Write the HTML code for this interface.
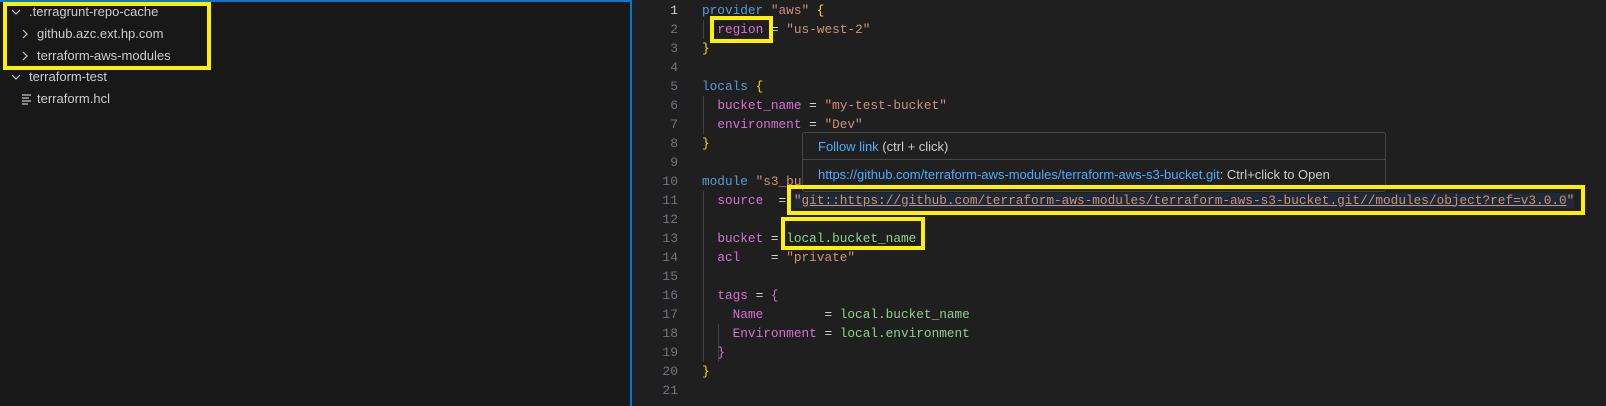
<!DOCTYPE html>
<html><head><meta charset="utf-8"><style>
body{margin:0;width:1606px;height:406px;background:#1f1f1f;position:relative;overflow:hidden;font-family:"Liberation Sans",sans-serif}
#side{position:absolute;left:0;top:0;width:632px;height:406px;background:#181818;border-top:2px solid #0078d4;border-right:2px solid #0078d4;box-sizing:border-box}
.row{position:absolute;height:22px;line-height:22px;font-size:13px;color:#cccccc;white-space:nowrap}
.ln{position:absolute;left:640px;width:38px;text-align:right;font-family:"Liberation Mono",monospace;font-size:13px;color:#6e7681;height:19px;line-height:19px}
.code{position:absolute;left:702px;font-family:"Liberation Mono",monospace;font-size:12.75px;height:19px;line-height:19px;white-space:pre;color:#cccccc}
.k{color:#569cd6}.s{color:#ce9178}.p{color:#d670d6}.g{color:#8fd18b}.y{color:#ffd700}.m{color:#da70d6}.o{color:#d4d4d4}
.box{position:absolute;border:4px solid #ffef00;box-sizing:border-box}
.guide{position:absolute;width:1px;background:#404040}
</style></head><body>
<div id="side"></div>
<div class="row" style="left:29px;top:1px">.terragrunt-repo-cache</div>
<div class="row" style="left:37px;top:23px">github.azc.ext.hp.com</div>
<div class="row" style="left:37px;top:45px">terraform-aws-modules</div>
<div class="row" style="left:29px;top:66px">terraform-test</div>
<div class="row" style="left:37px;top:88px">terraform.hcl</div>
<svg style="position:absolute;left:0;top:0" width="40" height="110" fill="none" stroke="#c5c5c5" stroke-width="1.2">
<path d="M12 10l4 4 4-4"/><path d="M23 30l4 4-4 4"/><path d="M23 52l4 4-4 4"/><path d="M12 75l4 4 4-4"/>
<path d="M22 95h9M22 98h7M22 101h9M22 104h6"/></svg>
<div class="box" style="left:3px;top:2px;width:208px;height:68px"></div>

<div class="guide" style="left:703px;top:20px;height:19px"></div>
<div class="guide" style="left:703px;top:96px;height:38px"></div>
<div class="guide" style="left:703px;top:191px;height:171px"></div>
<div class="guide" style="left:718px;top:324px;height:38px"></div>

<div class="ln" style="top:0.5px;color:#cccccc">1</div>
<div class="ln" style="top:19.5px">2</div><div class="ln" style="top:38.5px">3</div><div class="ln" style="top:57.5px">4</div>
<div class="ln" style="top:76.5px">5</div><div class="ln" style="top:95.5px">6</div><div class="ln" style="top:114.5px">7</div>
<div class="ln" style="top:133.5px">8</div><div class="ln" style="top:152.5px">9</div><div class="ln" style="top:171.5px">10</div>
<div class="ln" style="top:190.5px">11</div><div class="ln" style="top:209.5px">12</div><div class="ln" style="top:228.5px">13</div>
<div class="ln" style="top:247.5px">14</div><div class="ln" style="top:266.5px">15</div><div class="ln" style="top:285.5px">16</div>
<div class="ln" style="top:304.5px">17</div><div class="ln" style="top:323.5px">18</div><div class="ln" style="top:342.5px">19</div>
<div class="ln" style="top:361.5px">20</div><div class="ln" style="top:380.5px">21</div>

<div class="code" style="top:0.5px"><span class="k">provider</span> <span class="s">"aws"</span> <span class="y">{</span></div>
<div class="code" style="top:19.5px">  <span class="p">region</span> <span class="o">=</span> <span class="s">"us-west-2"</span></div>
<div class="code" style="top:38.5px"><span class="y">}</span></div>
<div class="code" style="top:76.5px"><span class="k">locals</span> <span class="y">{</span></div>
<div class="code" style="top:95.5px">  <span class="p">bucket_name</span> <span class="o">=</span> <span class="s">"my-test-bucket"</span></div>
<div class="code" style="top:114.5px">  <span class="p">environment</span> <span class="o">=</span> <span class="s">"Dev"</span></div>
<div class="code" style="top:133.5px"><span class="y">}</span></div>
<div class="code" style="top:171.5px"><span class="k">module</span> <span class="s">"s3_bucket"</span> <span class="y">{</span></div>
<div class="code" style="top:190.5px">  <span class="p">source</span>  <span class="o">=</span> <span class="s" style="background:#1e2a38">"<u>git::</u><u>https://github.com/terraform-aws-modules/terraform-aws-s3-bucket.git//modules/object?ref=v3.0.0</u>"</span></div>
<div class="code" style="top:228.5px">  <span class="p">bucket</span> <span class="o">=</span> <span class="g">local.bucket_name</span></div>
<div class="code" style="top:247.5px">  <span class="p">acl</span>    <span class="o">=</span> <span class="s">"private"</span></div>
<div class="code" style="top:285.5px">  <span class="p">tags</span> <span class="o">=</span> <span class="m">{</span></div>
<div class="code" style="top:304.5px">    <span class="p">Name</span>        <span class="o">=</span> <span class="g">local.bucket_name</span></div>
<div class="code" style="top:323.5px">    <span class="p">Environment</span> <span class="o">=</span> <span class="g">local.environment</span></div>
<div class="code" style="top:342.5px">  <span class="m">}</span></div>
<div class="code" style="top:361.5px"><span class="y">}</span></div>

<div style="position:absolute;left:802px;top:132px;width:584px;height:60px;background:#202020;border:1px solid #454545;border-radius:3px;box-sizing:border-box;font-size:13px;color:#cccccc">
<div style="position:absolute;left:15px;top:5px;line-height:18px"><span style="color:#4daafc">Follow link</span> (ctrl + click)</div>
<div style="position:absolute;left:0;right:0;top:26px;border-top:1px solid #454545"></div>
<div style="position:absolute;left:15px;top:33px;line-height:18px;white-space:nowrap"><span style="color:#4daafc">https://github.com/terraform-aws-modules/terraform-aws-s3-bucket.git</span>: Ctrl+click to Open</div>
</div>

<div class="box" style="left:710px;top:16px;width:63px;height:27px"></div>
<div class="box" style="left:787px;top:185px;width:798px;height:30px"></div>
<div class="box" style="left:781px;top:217px;width:144px;height:33px"></div>
</body></html>
